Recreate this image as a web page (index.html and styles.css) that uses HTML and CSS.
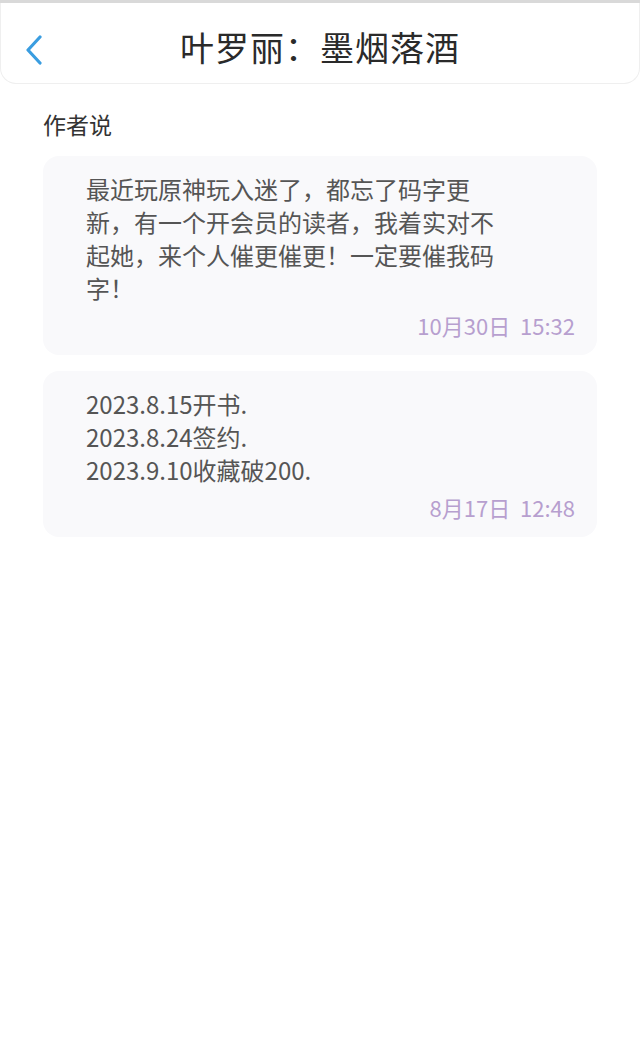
FILE: index.html
```html
<!DOCTYPE html>
<html lang="zh-CN">
<head>
    <meta charset="UTF-8">
    <meta name="viewport" content="width=device-width, initial-scale=1.0">
    <title>作者说</title>
    <link rel="stylesheet" href="styles.css">
</head>
<body>

    <div class="status-line"></div>

    <!-- Top bar -->
    <header class="top-bar">
        <button class="back-btn" aria-label="返回">
            <svg width="18" height="30" viewBox="0 0 18 30">
                <path d="M15 2 L3 15 L15 28" fill="none" stroke="#3a9de0" stroke-width="3.2" stroke-linecap="round" stroke-linejoin="round"/>
            </svg>
        </button>
        <h1 class="title">叶罗丽：墨烟落酒</h1>
    </header>

    <main class="content">
        <h2 class="section-title">作者说</h2>

        <div class="note">
            <p class="note-text">最近玩原神玩入迷了，都忘了码字更新，有一个开会员的读者，我着实对不起她，来个人催更催更！一定要催我码字！</p>
            <div class="note-time">10月30日&nbsp;&nbsp;15:32</div>
        </div>

        <div class="note">
            <p class="note-text">2023.8.15开书.<br>2023.8.24签约.<br>2023.9.10收藏破200.</p>
            <div class="note-time">8月17日&nbsp;&nbsp;12:48</div>
        </div>
    </main>

</body>
</html>
```

FILE: styles.css
```css
* {
    box-sizing: border-box;
}
body {
    margin: 0;
    background: #fff;
    font-family: "Noto Sans CJK SC", "Noto Sans", sans-serif;
    color: #333;
}
.status-line {
    height: 3px;
    background: #d9d9d9;
}
.top-bar {
    position: relative;
    height: 81px;
    display: flex;
    align-items: center;
    justify-content: center;
    padding-top: 6px;
    background: #fff;
    border: 1px solid #efefef;
    border-top: none;
    border-radius: 0 0 16px 16px;
}
.back-btn {
    position: absolute;
    left: 24px;
    top: 32px;
    padding: 0;
    border: none;
    background: none;
    line-height: 0;
}
.title {
    margin: 0;
    font-size: 34px;
    font-weight: 400;
    color: #2a2a2a;
    letter-spacing: 1px;
}
.content {
    padding: 24px 43px;
}
.section-title {
    margin: 0 0 16px;
    font-size: 23px;
    font-weight: 400;
    line-height: 32px;
    color: #333;
}
.note {
    background: #f9f9fb;
    border-radius: 16px;
    padding: 16px 22px 14px 43px;
    margin-bottom: 16px;
}
.note-text {
    margin: 0;
    max-width: 418px;
    font-size: 24px;
    line-height: 33px;
    color: #555;
}
.note-time {
    margin-top: 5px;
    text-align: right;
    font-size: 22px;
    line-height: 32px;
    color: #b79fcf;
}
```
